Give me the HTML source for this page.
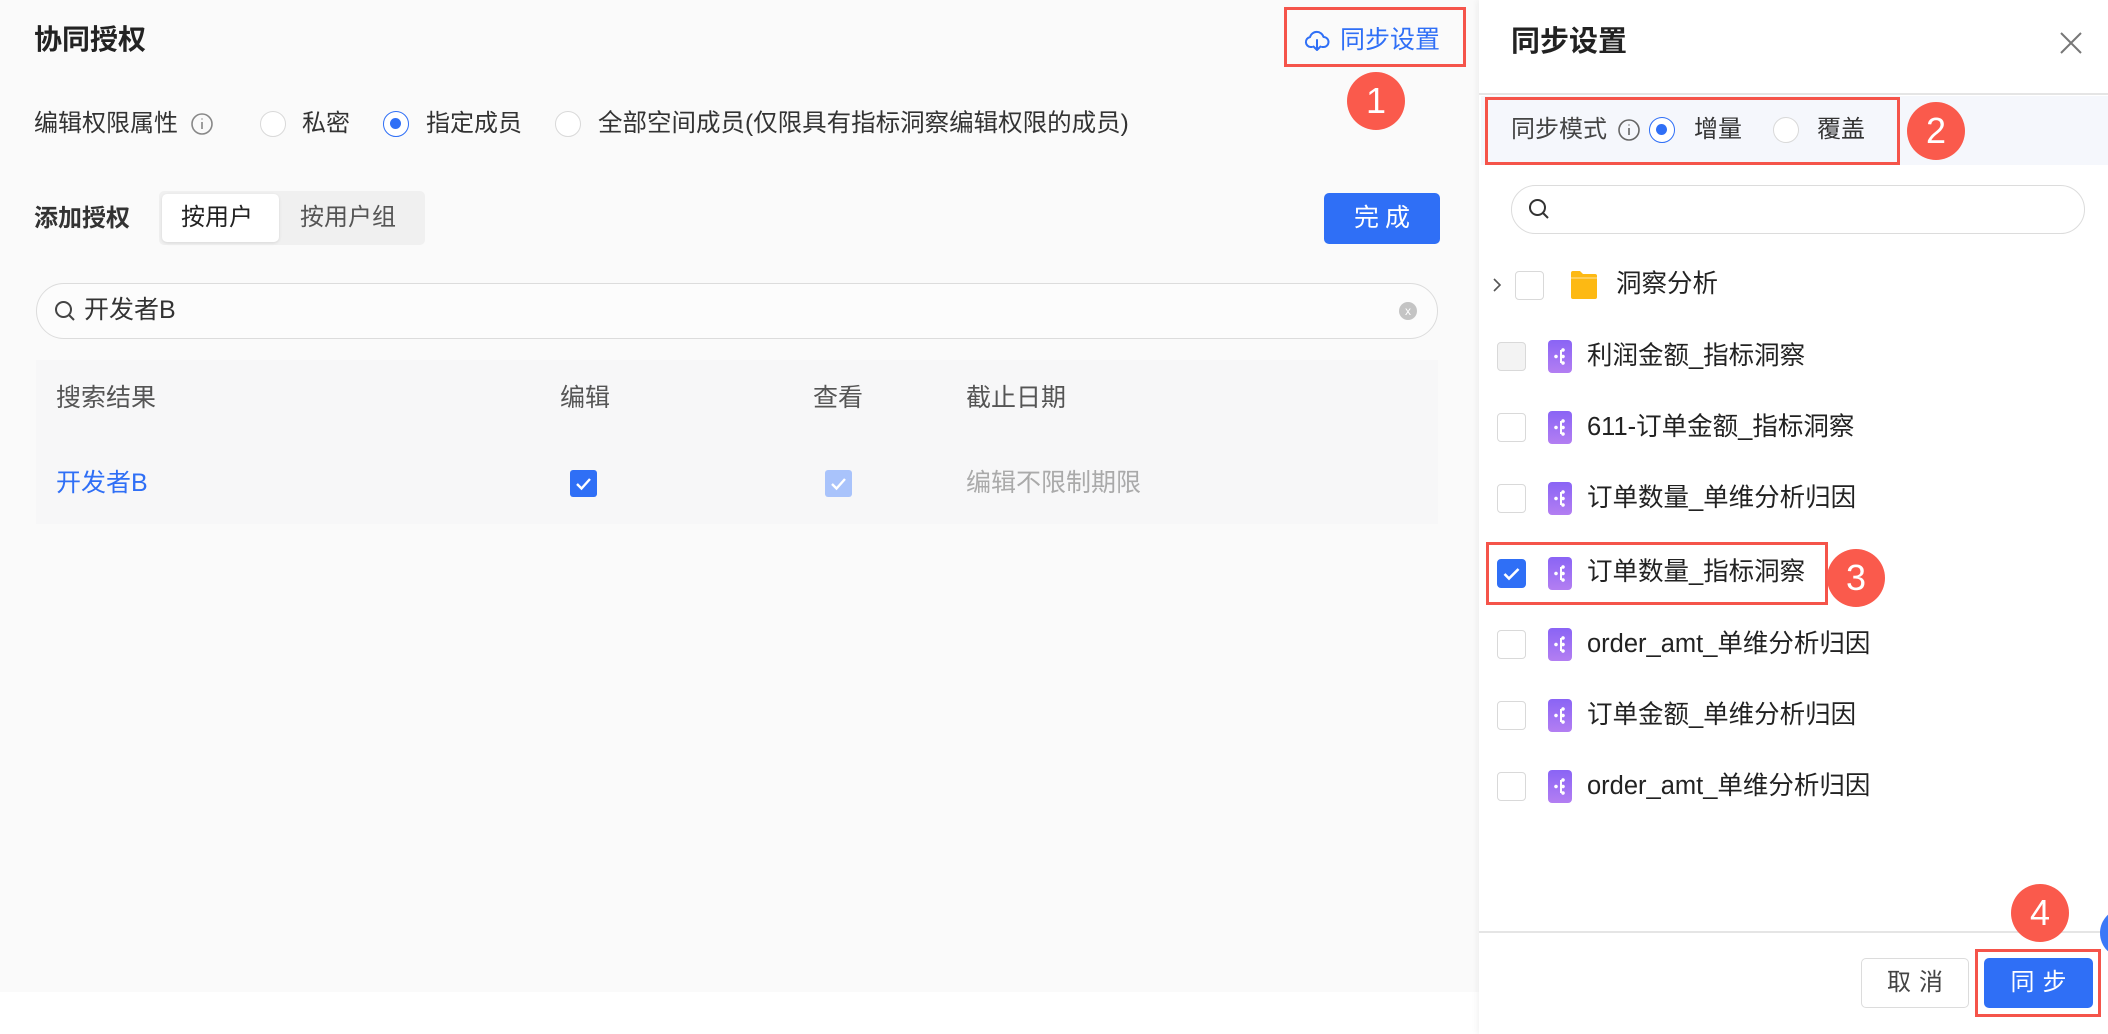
<!DOCTYPE html>
<html><head><meta charset="utf-8"><style>
*{box-sizing:border-box;margin:0;padding:0}
body{width:2108px;height:1034px;position:relative;overflow:hidden;background:#fff;font-family:"Liberation Sans","Noto Sans CJK SC",sans-serif;color:#333}
.a{position:absolute}
.t{white-space:nowrap;line-height:1}
.radio{position:absolute;width:26px;height:26px;border:1.5px solid #d9d9d9;border-radius:50%;background:#fff}
.radio.on{border-color:#2f6ff6}
.radio.on:after{content:"";position:absolute;left:6px;top:6px;width:11px;height:11px;border-radius:50%;background:#2f6ff6}
.badge{position:absolute;width:58px;height:58px;border-radius:50%;background:#fa5a4c;color:#fff;font-size:36px;text-align:center;line-height:58px}
.rbox{position:absolute;border:3px solid #f5544a}
.cb{position:absolute;width:29px;height:29px;border:1.5px solid #d9d9d9;border-radius:4px;background:#fff}
.ic{position:absolute;width:24px;height:33px;border-radius:4px;background:linear-gradient(#8a64f5,#b37ef2)}
.it{position:absolute;font-size:25.5px;color:#222;white-space:nowrap;line-height:1}
.ic:after{content:"";position:absolute;left:0;top:0;width:24px;height:33px;background:
radial-gradient(circle at 8px 16.5px,#fff 1.6px,transparent 2px),
radial-gradient(circle at 15px 10px,#fff 1.6px,transparent 2px),
radial-gradient(circle at 15px 16.5px,#fff 1.6px,transparent 2px),
radial-gradient(circle at 15px 23px,#fff 1.6px,transparent 2px);}
.ic:before{content:"";position:absolute;left:12px;top:10px;width:1.5px;height:13px;background:#fff}
</style></head><body>
<div class="a" style="left:0;top:0;width:1479px;height:992px;background:#fafafa"></div>
<div class="a t" style="left:34px;top:26px;font-size:28px;font-weight:bold;color:#222">协同授权</div>

<svg class="a" style="left:1304px;top:28px" width="26" height="26" viewBox="0 0 26 26" fill="none" stroke="#2f6ff6" stroke-width="2" stroke-linecap="round" stroke-linejoin="round"><path d="M8 19H6.5A5 5 0 0 1 6 9.1 7 7 0 0 1 19.5 9 5 5 0 0 1 19.5 19H18"/><path d="M13 12v10M9.5 18.5 13 22l3.5-3.5"/></svg>
<div class="a t" style="left:1340px;top:28px;font-size:25px;color:#2f6ff6">同步设置</div>
<div class="rbox" style="left:1284px;top:7px;width:182px;height:60px"></div>
<div class="badge" style="left:1347px;top:72px">1</div>

<div class="a t" style="left:34px;top:112px;font-size:24px;color:#333">编辑权限属性</div>
<svg class="a" style="left:190px;top:112px" width="24" height="24" viewBox="0 0 24 24" fill="none" stroke="#888" stroke-width="1.6"><circle cx="12" cy="12" r="10"/><path d="M12 10v7M12 6.5v1"/></svg>
<div class="radio" style="left:260px;top:111px"></div>
<div class="a t" style="left:302px;top:112px;font-size:24px;color:#333">私密</div>
<div class="radio on" style="left:383px;top:111px"></div>
<div class="a t" style="left:426px;top:112px;font-size:24px;color:#333">指定成员</div>
<div class="radio" style="left:555px;top:111px"></div>
<div class="a t" style="left:598px;top:112px;font-size:24.5px;color:#333">全部空间成员(仅限具有指标洞察编辑权限的成员)</div>

<div class="a t" style="left:34px;top:207px;font-size:24px;font-weight:bold;color:#333">添加授权</div>
<div class="a" style="left:159px;top:191px;width:266px;height:54px;background:#f0f0f0;border-radius:5px"></div>
<div class="a" style="left:162px;top:194px;width:117px;height:48px;background:#fff;border-radius:5px;box-shadow:0 1px 3px rgba(0,0,0,.1)"></div>
<div class="a t" style="left:181px;top:206px;font-size:24px;color:#222">按用户</div>
<div class="a t" style="left:300px;top:206px;font-size:24px;color:#555">按用户组</div>
<div class="a" style="left:1324px;top:193px;width:116px;height:51px;background:#2f6ff6;border-radius:5px;color:#fff;font-size:25px;text-align:center;line-height:51px;letter-spacing:6px;padding-left:6px">完成</div>

<div class="a" style="left:36px;top:283px;width:1402px;height:56px;border:1.5px solid #dcdcdc;border-radius:28px;background:#fcfcfc"></div>
<svg class="a" style="left:53px;top:299px" width="24" height="24" viewBox="0 0 24 24" fill="none" stroke="#444" stroke-width="2"><circle cx="10.5" cy="10.5" r="7.5"/><path d="M16 16l5 5"/></svg>
<div class="a t" style="left:84px;top:298px;font-size:25px;color:#333">开发者B</div>
<div class="a" style="left:1399px;top:302px;width:18px;height:18px;border-radius:50%;background:#c4c4c4;color:#fff;font-size:12px;text-align:center;line-height:18px">x</div>

<div class="a" style="left:36px;top:360px;width:1402px;height:164px;background:#f7f7f8"></div>
<div class="a t" style="left:56px;top:386px;font-size:25px;color:#555">搜索结果</div>
<div class="a t" style="left:560px;top:386px;font-size:25px;color:#555">编辑</div>
<div class="a t" style="left:813px;top:386px;font-size:25px;color:#555">查看</div>
<div class="a t" style="left:966px;top:386px;font-size:25px;color:#555">截止日期</div>
<div class="a t" style="left:56px;top:471px;font-size:25px;color:#2f6ff6">开发者B</div>
<svg class="a" style="left:570px;top:470px" width="27" height="27" viewBox="0 0 27 27"><rect width="27" height="27" rx="3" fill="#2f6ff6"/><path d="M7 14l4.5 4.5L20 9" stroke="#fff" stroke-width="2.4" fill="none"/></svg>
<svg class="a" style="left:825px;top:470px" width="27" height="27" viewBox="0 0 27 27"><rect width="27" height="27" rx="3" fill="#a9c3fb"/><path d="M7 14l4.5 4.5L20 9" stroke="#fff" stroke-width="2.4" fill="none"/></svg>
<div class="a t" style="left:966px;top:471px;font-size:25px;color:#aaa">编辑不限制期限</div>

<div class="a" style="left:1479px;top:0;width:629px;height:1034px;background:#fff;box-shadow:-2px 0 6px rgba(0,0,0,.05)"></div>
<div class="a t" style="left:1511px;top:28px;font-size:29px;font-weight:bold;color:#222">同步设置</div>
<svg class="a" style="left:2059px;top:31px" width="24" height="24" viewBox="0 0 24 24" stroke="#777" stroke-width="2"><path d="M2 2l20 20M22 2 2 22"/></svg>
<div class="a" style="left:1479px;top:93px;width:629px;height:1.5px;background:#e5e5e5"></div>
<div class="a" style="left:1481px;top:96px;width:627px;height:69px;background:#f5f7fc"></div>
<div class="a t" style="left:1511px;top:118px;font-size:24px;color:#444">同步模式</div>
<svg class="a" style="left:1617px;top:118px" width="24" height="24" viewBox="0 0 24 24" fill="none" stroke="#666" stroke-width="1.6"><circle cx="12" cy="12" r="10"/><path d="M12 10v7M12 6.5v1"/></svg>
<div class="radio on" style="left:1649px;top:117px"></div>
<div class="a t" style="left:1694px;top:118px;font-size:24px;color:#333">增量</div>
<div class="radio" style="left:1773px;top:117px"></div>
<div class="a t" style="left:1817px;top:118px;font-size:24px;color:#333">覆盖</div>
<div class="rbox" style="left:1485px;top:97px;width:415px;height:68px"></div>
<div class="badge" style="left:1907px;top:102px">2</div>

<div class="a" style="left:1511px;top:185px;width:574px;height:49px;border:1.5px solid #dcdcdc;border-radius:25px"></div>
<svg class="a" style="left:1527px;top:197px" width="24" height="24" viewBox="0 0 24 24" fill="none" stroke="#333" stroke-width="2"><circle cx="10.5" cy="10.5" r="7.5"/><path d="M16 16l5 5"/></svg>

<svg class="a" style="left:1491px;top:277px" width="12" height="16" viewBox="0 0 12 16" fill="none" stroke="#555" stroke-width="1.6"><path d="M3 2l6 6-6 6"/></svg>
<div class="cb" style="left:1515px;top:271px"></div>
<svg class="a" style="left:1569px;top:269px" width="30" height="32" viewBox="0 0 30 32"><path d="M2 4a2 2 0 0 1 2-2h7l3 3h12a2 2 0 0 1 2 2v21a2 2 0 0 1-2 2H4a2 2 0 0 1-2-2z" fill="#fdb913"/><path d="M2 9h26" stroke="#fff" stroke-width="1" opacity=".6"/></svg>
<div class="it" style="left:1616px;top:272px">洞察分析</div>

<div class="cb" style="left:1497px;top:342px;background:#f3f3f3"></div>
<div class="ic" style="left:1548px;top:340px"></div>
<div class="it" style="left:1587px;top:344px">利润金额_指标洞察</div>

<div class="cb" style="left:1497px;top:413px"></div>
<div class="ic" style="left:1548px;top:411px"></div>
<div class="it" style="left:1587px;top:415px">611-订单金额_指标洞察</div>

<div class="cb" style="left:1497px;top:484px"></div>
<div class="ic" style="left:1548px;top:482px"></div>
<div class="it" style="left:1587px;top:486px">订单数量_单维分析归因</div>

<svg class="a" style="left:1497px;top:559px" width="29" height="29" viewBox="0 0 29 29"><rect width="29" height="29" rx="4" fill="#2f6ff6"/><path d="M7.5 15l4.5 4.5L21.5 10" stroke="#fff" stroke-width="2.6" fill="none"/></svg>
<div class="ic" style="left:1548px;top:557px"></div>
<div class="it" style="left:1587px;top:560px">订单数量_指标洞察</div>
<div class="rbox" style="left:1486px;top:542px;width:342px;height:63px"></div>
<div class="badge" style="left:1827px;top:549px">3</div>

<div class="cb" style="left:1497px;top:630px"></div>
<div class="ic" style="left:1548px;top:628px"></div>
<div class="it" style="left:1587px;top:632px">order_amt_单维分析归因</div>

<div class="cb" style="left:1497px;top:701px"></div>
<div class="ic" style="left:1548px;top:699px"></div>
<div class="it" style="left:1587px;top:703px">订单金额_单维分析归因</div>

<div class="cb" style="left:1497px;top:772px"></div>
<div class="ic" style="left:1548px;top:770px"></div>
<div class="it" style="left:1587px;top:774px">order_amt_单维分析归因</div>

<div class="a" style="left:1479px;top:931px;width:629px;height:1.5px;background:#e5e5e5"></div>
<div class="a" style="left:1861px;top:958px;width:108px;height:50px;border:1.5px solid #dcdcdc;border-radius:5px;text-align:center;line-height:47px;font-size:24px;color:#444;letter-spacing:8px;padding-left:8px">取消</div>
<div class="a" style="left:1984px;top:958px;width:109px;height:50px;background:#2f6ff6;border-radius:5px;text-align:center;line-height:50px;font-size:24px;color:#fff;letter-spacing:8px;padding-left:8px">同步</div>
<div class="rbox" style="left:1975px;top:949px;width:126px;height:68px"></div>
<div class="badge" style="left:2011px;top:884px">4</div>
<div class="a" style="left:2100px;top:908px;width:50px;height:50px;border-radius:50%;background:#3b78f7"></div>
</body></html>
